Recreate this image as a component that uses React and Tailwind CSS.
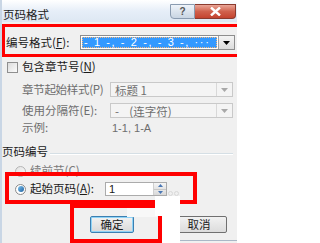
import React from 'react';

const Drop = ({ dark }) => (
  <div className={`w-[16px] h-full flex items-center justify-center border-l ${dark ? 'border-[#a0a0a0] bg-gradient-to-b from-[#f4f4f4] to-[#dcdcdc]' : 'border-[#d8d8d8] bg-[#f4f4f4]'}`}>
    <svg width="7" height="4" viewBox="0 0 7 4">
      <path d="M0 0h7L3.5 4z" fill={dark ? '#000' : '#a8a8a8'} />
    </svg>
  </div>
);

const App = () => {
  return (
    <div className="w-[237px] h-[243px] relative overflow-hidden bg-[#f0f0f0] text-[11.5px] leading-none text-[#1a1a1a] font-['Noto_Sans_CJK_SC','Liberation_Sans',sans-serif] border-l-2 border-[#c9d6e5]">
      {/* Title bar */}
      <div className="h-[22px] bg-gradient-to-b from-[#ffffff] via-[#e6eef8] to-[#dde7f3] flex items-start justify-between">
        <span className="pt-[9px] pl-[1px] text-[#222]">页码格式</span>
        <div className="flex mt-[4px] mr-[1px]">
          <div className="w-[25px] h-[15px] rounded-bl-[4px] border border-[#8a9bb0] bg-gradient-to-b from-[#eef3f9] to-[#c9d5e3] flex items-center justify-center text-[10px] font-bold text-[#555] font-['Liberation_Sans',sans-serif]">
            ?
          </div>
          <div className="w-[41px] h-[15px] rounded-br-[4px] border border-l-0 border-[#8a3a2e] bg-gradient-to-b from-[#e9a597] via-[#d0614d] to-[#c4432f] flex items-center justify-center">
            <svg width="11" height="9" viewBox="0 0 11 9">
              <path d="M1 0.5L10 8.5M10 0.5L1 8.5" stroke="#fff" strokeWidth="2.4" />
            </svg>
          </div>
        </div>
      </div>

      {/* Format row */}
      <div className="mt-[13px] h-[15px] flex items-center">
        <span className="pl-[4px] w-[78px]">
          编号格式(<span className="underline">F</span>):
        </span>
        <div className="w-[155px] h-full border border-[#8e8e8e] bg-white flex">
          <div className="flex-1 m-[1px] bg-[#3399ff] border border-dotted border-[#f7b77a] flex items-center">
            <span className="pl-[1px] whitespace-pre text-white text-[11px] tracking-[1.6px] font-['Liberation_Sans',sans-serif]">
              - 1 -, - 2 -, - 3 -, ···
            </span>
          </div>
          <Drop dark />
        </div>
      </div>

      {/* Include chapter */}
      <div className="mt-[10px] h-[14px] flex items-center pl-[5px]">
        <div className="w-[11px] h-[11px] border border-[#8f8f8f] bg-gradient-to-br from-[#dcdcdc] to-[#fbfbfb]" />
        <span className="ml-[4px]">
          包含章节号(<span className="underline">N</span>)
        </span>
      </div>

      {/* Chapter style */}
      <div className="mt-[8px] h-[15px] flex items-center">
        <span className="pl-[20px] w-[108px] text-[#6e6e6e] tracking-[-0.3px]">章节起始样式(P)</span>
        <div className="w-[123px] h-full border border-[#c9c9c9] bg-[#f4f4f4] flex">
          <span className="flex-1 pl-[4px] pt-[2px] text-[#6e6e6e]">标题 1</span>
          <Drop />
        </div>
      </div>

      {/* Separator */}
      <div className="mt-[6px] h-[15px] flex items-center">
        <span className="pl-[20px] w-[108px] text-[#6e6e6e]">使用分隔符(E):</span>
        <div className="w-[123px] h-full border border-[#c9c9c9] bg-[#f4f4f4] flex">
          <span className="flex-1 pl-[4px] pt-[2px] text-[#6e6e6e] whitespace-pre">-    (连字符)</span>
          <Drop />
        </div>
      </div>

      {/* Example */}
      <div className="mt-[4px] h-[12px] flex items-center">
        <span className="pl-[20px] w-[110px] text-[#6e6e6e]">示例:</span>
        <span className="text-[11px] text-[#6e6e6e] font-['Liberation_Sans',sans-serif]">1-1, 1-A</span>
      </div>

      {/* Page numbering group */}
      <div className="mt-[12px] h-[12px] flex items-center">
        <span>页码编号</span>
        <div className="flex-1 ml-[2px] mr-[4px] mt-[4px] h-[2px] border-t border-[#d5dfe5] border-b border-b-white" />
      </div>

      <div className="mt-[7px] h-[12px] flex items-center pl-[13px]">
        <div className="w-[11px] h-[11px] rounded-full border border-[#b5b5b5] bg-gradient-to-br from-[#e2e2e2] to-[#fafafa]" />
        <span className="ml-[4px] text-[#7a7a7a]">续前节(C)</span>
      </div>

      <div className="mt-[5px] h-[14px] flex items-center pl-[13px]">
        <div className="w-[11px] h-[11px] rounded-full border border-[#8a8a8a] bg-white flex items-center justify-center">
          <div className="w-[6px] h-[6px] rounded-full bg-gradient-to-br from-[#7fc4f0] to-[#1b5f9e]" />
        </div>
        <span className="ml-[4px] w-[75px]">
          起始页码(<span className="underline">A</span>):
        </span>
        <div className="w-[62px] h-full border border-[#ababab] bg-white flex">
          <span className="flex-1 pl-[3px] pt-[1px] text-[11px] font-['Liberation_Sans',sans-serif]">1</span>
          <div className="w-[13px] flex flex-col border-l border-[#d0d0d0]">
            <div className="flex-1 flex items-center justify-center bg-gradient-to-b from-[#f6f6f6] to-[#e4e4e4]">
              <svg width="5" height="3" viewBox="0 0 5 3"><path d="M0 3h5L2.5 0z" fill="#4a77b4" /></svg>
            </div>
            <div className="flex-1 flex items-center justify-center bg-gradient-to-b from-[#e8e8e8] to-[#d8d8d8] border-t border-[#c8c8c8]">
              <svg width="5" height="3" viewBox="0 0 5 3"><path d="M0 0h5L2.5 3z" fill="#4a77b4" /></svg>
            </div>
          </div>
        </div>
      </div>

      {/* Buttons */}
      <div className="mt-[20px] h-[17px] flex">
        <div className="ml-[88px] w-[44px] h-full border border-[#3c7fb1] rounded-[2px] bg-gradient-to-b from-[#f2f2f2] to-[#d9d9d9] flex items-center justify-center shadow-[inset_0_0_0_1px_#8fd3f6]">
          确定
        </div>
        <div className="ml-[33px] w-[60px] h-full border border-[#707070] rounded-[2px] bg-gradient-to-b from-[#f2f2f2] to-[#dcdcdc] flex items-center justify-center pl-[4px]">
          取消
        </div>
      </div>

      {/* Dialog bottom edge */}
      <div className="absolute left-[70px] right-0 bottom-[2px] h-[1px] bg-[#aab7c6]" />

      {/* Red annotation boxes */}
      <div className="absolute left-[0px] top-[24px] w-[250px] h-[33px] border-[3px] border-[#ff0000]" />
      <div className="absolute left-[3px] top-[172px] w-[192px] h-[32px] border-[4px] border-[#ff0000]" />
      <div className="absolute left-[68px] top-[204px] w-[92px] h-[39px] border-[4px] border-[#ff0000]" />

      {/* Light patches over the picture */}
      <div className="absolute left-[125px] top-[208px] w-[30px] h-[9px] bg-[#f8f8f8]" />
      <div className="absolute left-[153px] top-[196px] w-[25px] h-[20px] bg-white" />
      <div className="absolute left-[160px] top-[216px] w-[18px] h-[27px] bg-white" />
      <div className="absolute left-[166px] top-[191px] flex gap-[1px]">
        <div className="w-[5px] h-[5px] rounded-full border border-[#d8d8d8]" />
        <div className="w-[5px] h-[5px] rounded-full border border-[#d8d8d8]" />
      </div>
    </div>
  );
};

export default App;
